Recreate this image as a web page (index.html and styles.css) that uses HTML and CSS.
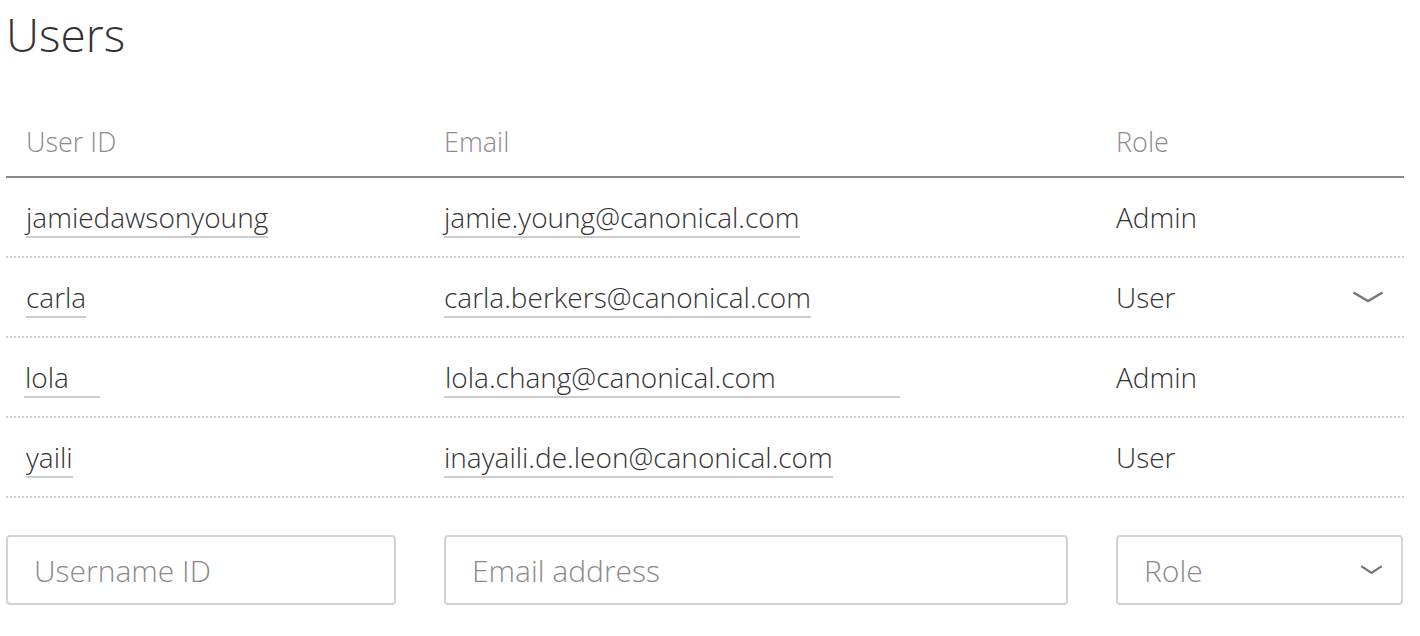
FILE: index.html
```html
<!DOCTYPE html>
<html lang="en">
<head>
<meta charset="utf-8">
<title>Users</title>
<link rel="stylesheet" href="styles.css">
</head>
<body>
<main class="page">
  <h1 class="title">Users</h1>
  <div class="table">
    <div class="row head">
      <div class="cell c1"><span>User ID</span></div>
      <div class="cell"><span>Email</span></div>
      <div class="cell"><span>Role</span></div>
    </div>
    <div class="row">
      <div class="cell c1"><span class="val">jamiedawsonyoung</span></div>
      <div class="cell"><span class="val">jamie.young@canonical.com</span></div>
      <div class="cell"><span>Admin</span></div>
    </div>
    <div class="row">
      <div class="cell c1"><span class="val">carla</span></div>
      <div class="cell"><span class="val">carla.berkers@canonical.com</span></div>
      <div class="cell role-edit"><span>User</span>
        <svg class="chev" width="32" height="12" viewBox="0 0 32 12"><path d="M1.5 1.5 L16 10 L30.5 1.5" fill="none" stroke="#777" stroke-width="2.5"/></svg>
      </div>
    </div>
    <div class="row">
      <div class="cell c1 tight"><input class="edit edit-id" type="text" value="lola"></div>
      <div class="cell"><input class="edit edit-email" type="text" value="lola.chang@canonical.com"></div>
      <div class="cell"><span>Admin</span></div>
    </div>
    <div class="row">
      <div class="cell c1"><span class="val">yaili</span></div>
      <div class="cell"><span class="val">inayaili.de.leon@canonical.com</span></div>
      <div class="cell"><span>User</span></div>
    </div>
  </div>
  <form class="add">
    <input class="field" type="text" placeholder="Username ID">
    <input class="field" type="text" placeholder="Email address">
    <div class="field select"><span>Role</span>
      <svg class="chev-s" width="23" height="10" viewBox="0 0 23 10"><path d="M1.2 1.2 L11.5 8 L21.8 1.2" fill="none" stroke="#777" stroke-width="2.2"/></svg>
    </div>
  </form>
</main>
</body>
</html>
```
FILE: styles.css
```css
html, body {
  margin: 0;
  padding: 0;
  background: #fff;
}
body {
  font-family: "Open Sans", "Noto Sans", sans-serif;
  font-weight: 300;
  color: #333;
}
.page {
  width: 1398px;
  margin-left: 6px;
}
.title {
  margin: 0;
  padding-top: 2px;
  font-size: 46px;
  line-height: 64px;
  font-weight: 300;
  color: #333;
}
.row {
  display: grid;
  grid-template-columns: 438px 672px 288px;
  height: 80px;
  box-sizing: border-box;
  border-bottom: 2px dotted #cfcfcf;
}
.cell {
  padding-top: 22px;
  font-size: 28px;
  line-height: 34px;
  white-space: nowrap;
}
.cell.c1 {
  padding-left: 20px;
}
.cell.tight {
  padding-left: 18px;
}
.head {
  height: auto;
  padding: 59px 0 17px;
  border-bottom: 2px solid #888;
  color: #8c8c8c;
}
.head .cell {
  padding-top: 0;
  font-size: 27px;
}
.val {
  display: inline-block;
  padding-bottom: 2px;
  border-bottom: 2px solid #ccc;
}
.edit {
  display: block;
  box-sizing: border-box;
  height: 38px;
  margin: 0;
  padding: 0 0 2px 1px;
  border: 0;
  border-bottom: 2px solid #ccc;
  font: inherit;
  color: #333;
  background: transparent;
  outline: none;
}
.edit-id { width: 76px; }
.edit-email { width: 456px; }
.role-edit {
  display: flex;
  align-items: flex-start;
  justify-content: space-between;
  padding-right: 20px;
}
.chev {
  margin-top: 11px;
}
.add {
  display: grid;
  grid-template-columns: 390px 624px 287px;
  column-gap: 48px;
  margin-top: 37px;
}
.field {
  box-sizing: border-box;
  height: 70px;
  margin: 0;
  padding: 0 0 0 26px;
  border: 2px solid #d3d3d3;
  border-radius: 4px;
  font-family: inherit;
  font-weight: 300;
  font-size: 30px;
  color: #333;
  background: #fff;
  outline: none;
}
.field::placeholder {
  color: #8a8a8a;
  opacity: 1;
}
.select {
  display: flex;
  align-items: center;
  justify-content: space-between;
  padding-right: 18px;
  color: #8a8a8a;
}
```
